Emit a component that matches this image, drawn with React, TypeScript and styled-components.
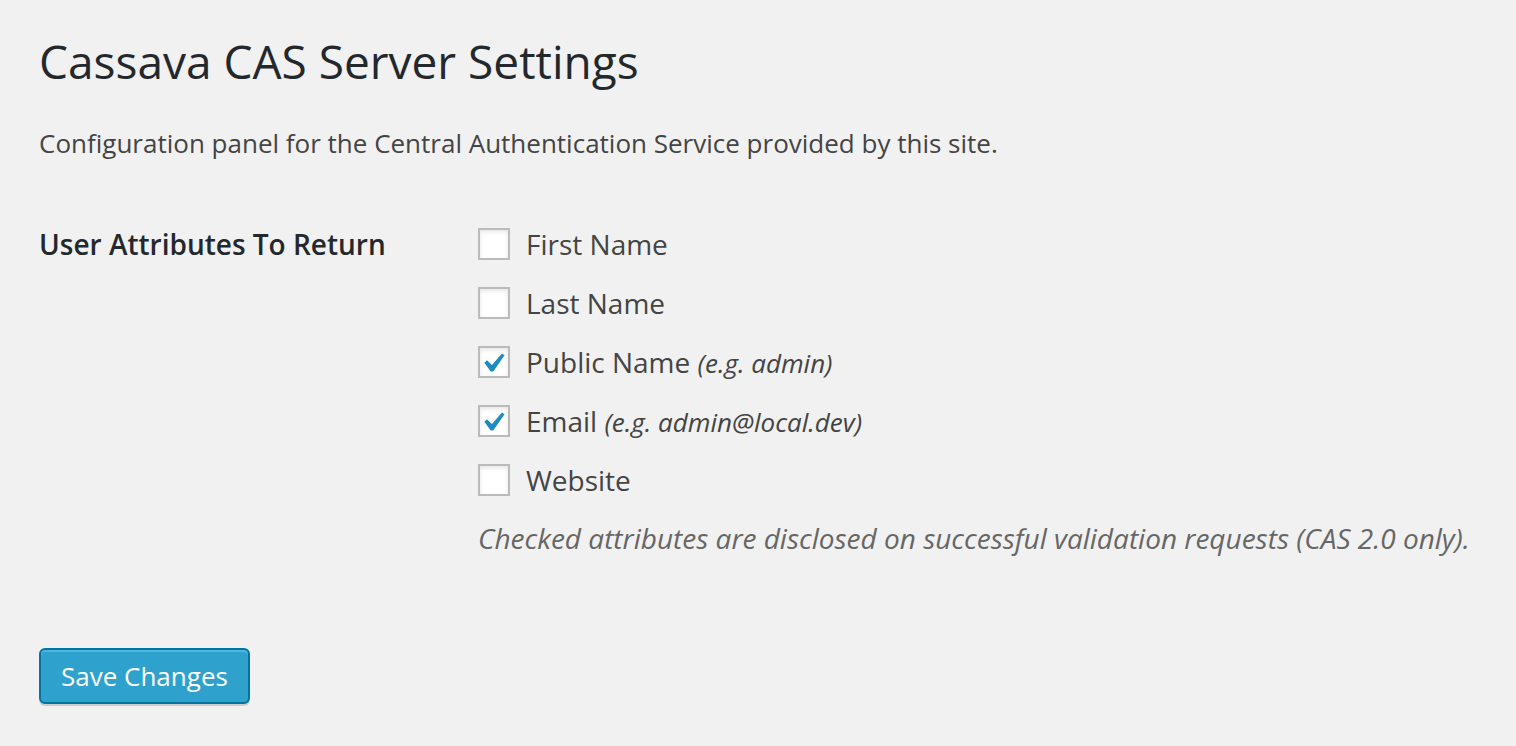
import React from "react";
import styled, { createGlobalStyle } from "styled-components";

const Global = createGlobalStyle`
  html, body { margin: 0; padding: 0; background: #f1f1f1; }
  body { font-family: "Open Sans", "Noto Sans", sans-serif; color: #444; }
`;

const Page = styled.div`
  padding: 31px 39px 40px 39px;
  min-height: 746px;
  box-sizing: border-box;
  background: #f1f1f1;
`;

const Title = styled.h1`
  margin: 0;
  font-size: 46px;
  font-weight: 400;
  line-height: 60px;
  color: #23282d;
`;

const Intro = styled.p`
  margin: 31px 0 0 0;
  font-size: 26px;
  line-height: 42px;
  color: #444;
`;

const FormTable = styled.div`
  display: grid;
  grid-template-columns: 439px 1fr;
  align-items: start;
  margin-top: 59px;
`;

const RowLabel = styled.div`
  font-size: 28px;
  font-weight: 600;
  line-height: 42px;
  color: #23282d;
`;

const Field = styled.div`
  display: flex;
  flex-direction: column;
  gap: 17px;
`;

const Option = styled.label`
  display: flex;
  align-items: center;
  gap: 16px;
  height: 42px;
  font-size: 28px;
  line-height: 42px;
  color: #444;
`;

const Box = styled.span<{ $checked: boolean }>`
  position: relative;
  flex: none;
  width: 32px;
  height: 32px;
  box-sizing: border-box;
  border: 2px solid #bbbbbb;
  background: #fff;
  box-shadow: inset 0 2px 4px rgba(0, 0, 0, 0.1);
  display: flex;
  align-items: center;
  justify-content: center;
`;

const Hint = styled.em`
  font-style: italic;
  font-size: 26px;
`;

const Description = styled.p`
  margin: 16px 0 0 0;
  font-size: 28px;
  line-height: 42px;
  font-style: italic;
  color: #666;
`;

const SaveButton = styled.button`
  margin-top: 89px;
  height: 56px;
  padding: 0 20px 2px;
  font-family: "Open Sans", "Noto Sans", sans-serif;
  font-size: 26px;
  line-height: 52px;
  color: #fff;
  background: #2ea2cc;
  border: 2px solid #0074a2;
  border-radius: 6px;
  box-shadow: inset 0 2px 0 rgba(120, 200, 230, 0.5), 0 2px 0 rgba(0, 0, 0, 0.15);
  cursor: pointer;
`;

const Check = () => (
  <svg width="21" height="19" viewBox="5.6 4.7 10.8 9.7" style={{ marginTop: 1 }}>
    <path d="M14.83 4.89l1.34.94-5.81 8.38H9.02L5.78 9.67l1.34-1.25 2.57 2.4z" fill="#1e8cbe" />
  </svg>
);

const options: { label: string; hint?: string; checked: boolean }[] = [
  { label: "First Name", checked: false },
  { label: "Last Name", checked: false },
  { label: "Public Name", hint: "(e.g. admin)", checked: true },
  { label: "Email", hint: "(e.g. admin@local.dev)", checked: true },
  { label: "Website", checked: false },
];

export default function App() {
  return (
    <>
      <Global />
      <Page>
        <Title>Cassava CAS Server Settings</Title>
        <Intro>Configuration panel for the Central Authentication Service provided by this site.</Intro>
        <FormTable>
          <RowLabel>User Attributes To Return</RowLabel>
          <div>
            <Field>
              {options.map((o) => (
                <Option key={o.label}>
                  <Box $checked={o.checked}>{o.checked && <Check />}</Box>
                  <span>
                    {o.label}
                    {o.hint && <> <Hint>{o.hint}</Hint></>}
                  </span>
                </Option>
              ))}
            </Field>
            <Description>
              Checked attributes are disclosed on successful validation requests (CAS 2.0 only).
            </Description>
          </div>
        </FormTable>
        <SaveButton>Save Changes</SaveButton>
      </Page>
    </>
  );
}
